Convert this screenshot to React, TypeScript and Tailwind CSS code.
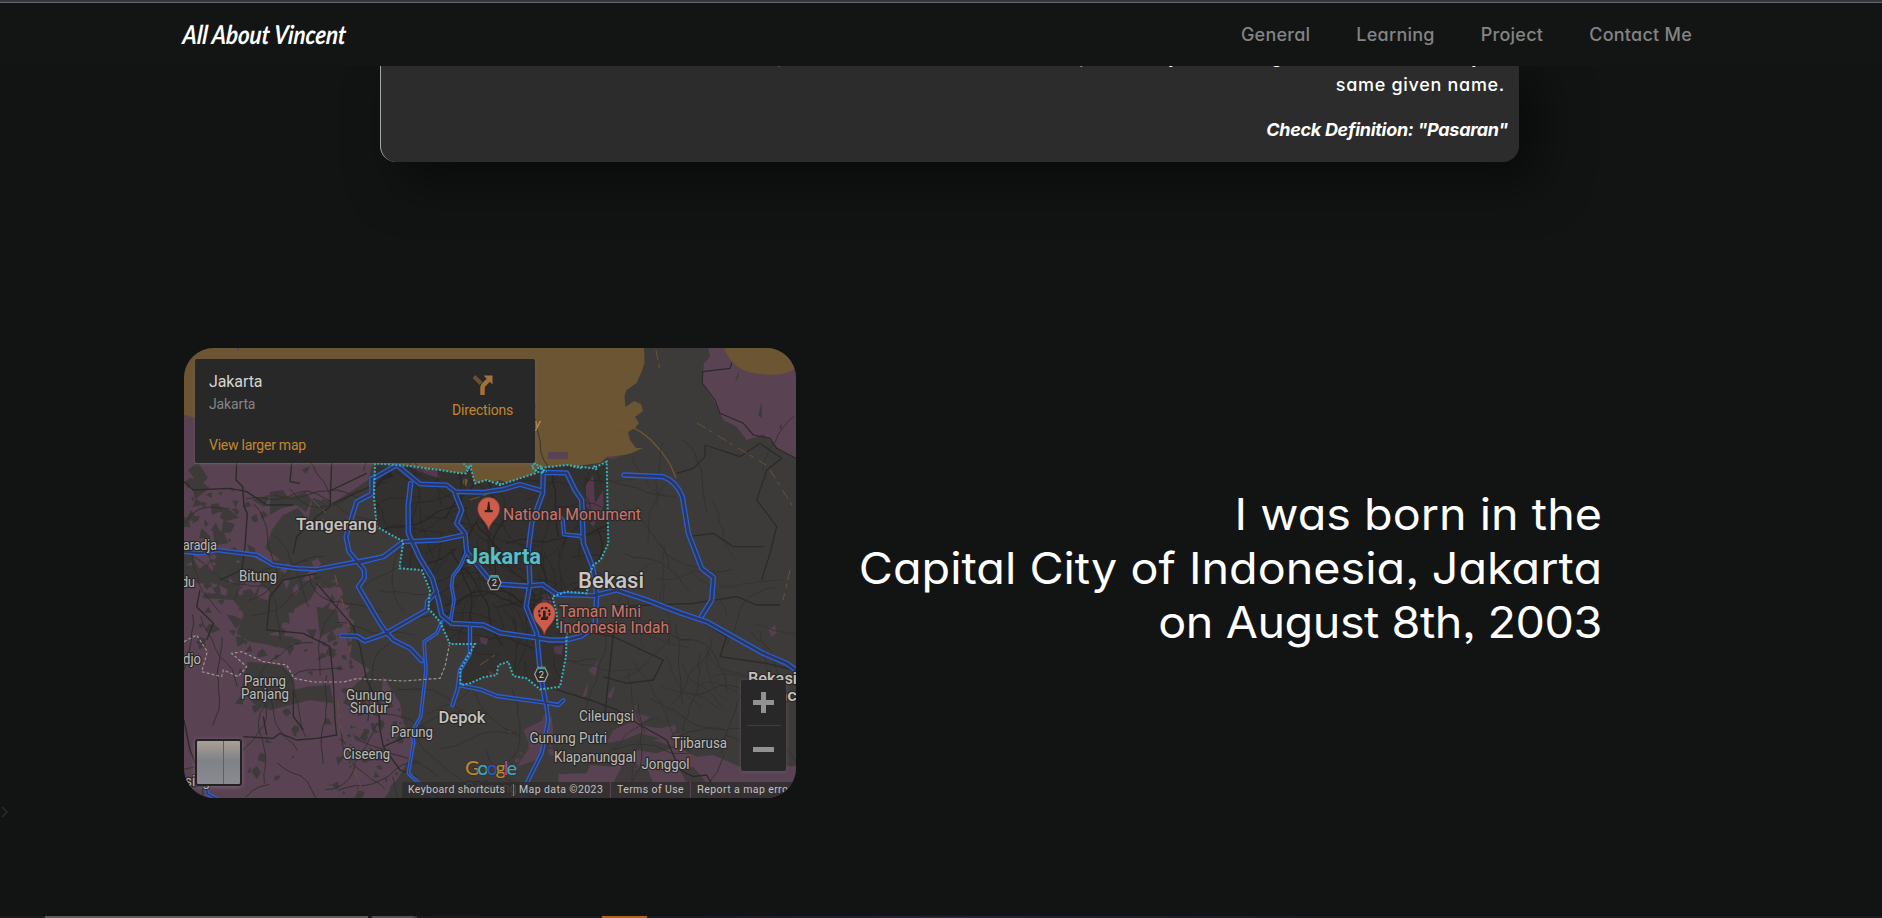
import React from "react";

const poppins = "font-[Inter,sans-serif] [font-feature-settings:'cv11'_1,'ss03'_1]";

type Pt = [number, number];

function rng(seed: number) {
  let s = seed;
  return () => {
    s = (s * 1664525 + 1013904223) % 4294967296;
    return s / 4294967296;
  };
}

function speckles(seed: number, n: number, x: number, y: number, w: number, h: number, size: number) {
  const r = rng(seed);
  let d = "";
  for (let i = 0; i < n; i++) {
    const cx = x + r() * w;
    const cy = y + r() * h;
    const k = 3 + Math.floor(r() * 3);
    const s = size * (0.3 + r());
    const a0 = r() * 6.28;
    for (let j = 0; j < k; j++) {
      const a = a0 + (j / k) * 6.28;
      const q = s * (0.3 + r());
      d += `${j ? "L" : "M"}${(cx + Math.cos(a) * q).toFixed(1)} ${(cy + Math.sin(a) * q).toFixed(1)}`;
    }
    d += "Z";
  }
  return d;
}

function lanes(seed: number, n: number, x: number, y: number, w: number, h: number, step: number, len: number) {
  const r = rng(seed);
  let d = "";
  for (let i = 0; i < n; i++) {
    let px = x + r() * w;
    let py = y + r() * h;
    let a = Math.floor(r() * 4) * 1.57 + (r() - 0.5) * 0.6;
    d += `M${px.toFixed(1)} ${py.toFixed(1)}`;
    for (let j = 0; j < len; j++) {
      a += (r() - 0.5) * 0.8;
      px += Math.cos(a) * step;
      py += Math.sin(a) * step;
      d += `L${px.toFixed(1)} ${py.toFixed(1)}`;
    }
  }
  return d;
}

const city =
  "45,70 42,170 50,260 130,305 118,385 185,390 210,450 205,505 240,545 270,612 345,612 300,690 302,735 330,730 370,712 410,705 415,675 445,665 460,708 500,715 540,748 600,740 618,650 620,580 592,560 590,520 577,470 620,455 680,460 690,400 700,375 722,360 745,310 740,65 700,85 620,75 530,85 525,100 470,118 420,135 380,120 345,130 330,75 318,100 300,100 240,90 150,78";

const highways: { at: Pt; w: number; d: string }[] = [
  { at: [360, 440], w: 11, d: "M35 118L110 75L180 132L260 135L285 155L370 157L430 148L480 133L545 152" },
  { at: [170, 340], w: 11, d: "M605 415L605 462L560 485L546 530L528 590L537 635L583 690L583 715L565 740L630 850L650 878L700 850L770 810L772 785L800 755" },
  { at: [360, 440], w: 12, d: "M152 130L144 200L145 280L180 355L217 415L235 480L245 525L275 550L370 555L420 578L520 592L570 600L620 600L665 588L705 555L710 465L698 380L670 310L665 180L645 150L620 99L550 97L548 160L515 250L505 330L510 430L498 500L530 580L540 690L555 780" },
  { at: [360, 440], w: 11, d: "M0 368L70 350L130 305L240 300L310 285" },
  { at: [360, 440], w: 12, d: "M285 160L305 210L290 250L315 280L320 335L385 415L410 432L500 438L548 434L590 463L700 467L770 450L860 480L960 518L1040 545L1120 590L1210 640L1280 670L1310 692" },
  { at: [360, 440], w: 7, d: "M318 340L300 380L278 410L275 440L282 480L272 540" },
  { at: [170, 570], w: 11, d: "M515 197L560 198L585 213L650 190M650 188L670 210L720 235L755 272" },
  { at: [170, 570], w: 7, d: "M815 155L800 190L762 215L768 300L752 440L730 480L730 520L715 610L780 670L790 690" },
  { at: [170, 570], w: 9, d: "M900 170L900 250L870 300L862 360L847 405" },
  { at: [480, 570], w: 9, d: "M-65 345L0 358L50 378L190 397L235 405L250 391" },
  { at: [480, 570], w: 9, d: "M195 380L205 450L185 550L140 640L125 690" },
  { at: [170, 340], w: 10, d: "M42 635L90 640L140 630L260 645L310 675L380 685L440 688L560 665L640 650L700 605" },
  { at: [480, 340], w: 12, d: "M432 405L550 410Q590 425 607 470L625 580L665 685L700 712L695 780L665 828" },
  { at: [360, 440], w: 9, d: "M590 222L608 240L612 283L660 288L672 300" },
  { at: [170, 570], w: 8, d: "M105 640L112 672L140 686" },
];

const labels: [string, number, number, number, number, number, string][] = [
  ["Tangerang", 296, 529.5, 17, 81, 500, "#c6c4c1"],
  ["aradja", 183, 549.5, 14, 34, 400, "#bdbbb8"],
  ["Bitung", 239, 581, 14, 38, 400, "#bdbbb8"],
  ["du", 181, 587, 14, 14, 400, "#bdbbb8"],
  ["djo", 183, 663.5, 14, 18, 400, "#bdbbb8"],
  ["Parung", 244, 685.5, 14, 42, 400, "#bdbbb8"],
  ["Panjang", 241, 699, 14, 48, 400, "#bdbbb8"],
  ["Gunung", 346, 699.5, 14, 46, 400, "#bdbbb8"],
  ["Sindur", 350, 713, 14, 38, 400, "#bdbbb8"],
  ["Parung", 391, 737, 14, 42, 400, "#bdbbb8"],
  ["Ciseeng", 343, 759, 14, 47, 400, "#bdbbb8"],
  ["Depok", 438.5, 722.5, 17, 47, 500, "#c6c4c1"],
  ["sing", 185, 785.5, 14, 25, 400, "#bdbbb8"],
  ["National Monument", 503, 520, 16, 138, 400, "#cf746c"],
  ["Jakarta", 466, 564, 22.5, 75, 700, "#55bfca"],
  ["Bekasi", 578, 587.5, 22, 66, 500, "#c9c7c4"],
  ["Taman Mini", 559, 616.5, 16, 82, 400, "#cf746c"],
  ["Indonesia Indah", 559, 632.5, 16, 110, 400, "#cf746c"],
  ["Bekasi", 748, 683.5, 16.5, 49, 500, "#c6c4c1"],
  ["nc", 777, 701, 16.5, 20, 500, "#c6c4c1"],
  ["Cileungsi", 579, 720.5, 14, 55, 400, "#bdbbb8"],
  ["Gunung Putri", 529.5, 742.5, 14, 77.5, 400, "#bdbbb8"],
  ["Klapanunggal", 554, 762, 14, 82, 400, "#bdbbb8"],
  ["Tjibarusa", 672, 747.5, 14, 55, 400, "#bdbbb8"],
  ["Jonggol", 641.5, 768.5, 14, 48, 400, "#bdbbb8"],
  ["Cibinong", 465, 793, 14, 52, 400, "#bdbbb8"],
];

function At({ p, children }: { p: Pt; children: React.ReactNode }) {
  return <g transform={`translate(${p[0]} ${p[1]}) scale(0.33333)`}>{children}</g>;
}

function Pin({ x, y, children }: { x: number; y: number; children: React.ReactNode }) {
  return (
    <g transform={`translate(${x} ${y})`}>
      <path d="M0 65C-5 38-33 30-33 0A33 33 0 0 1 33 0C33 30 5 38 0 65Z" fill="#cf5b4b" stroke="#7d3a35" strokeWidth="2" />
      {children}
    </g>
  );
}

function Shield({ x, y }: { x: number; y: number }) {
  return (
    <g transform={`translate(${x} ${y})`}>
      <path d="M-10-21H10L20 0L10 21H-10L-20 0Z" fill="#2b2a29" stroke="#a5a3a0" strokeWidth="3.5" />
      <path d="M-11-22H11L14-15H-14Z" fill="#3a9ba0" />
      <text y="10" textAnchor="middle" fontSize="28" fill="#d5d3d0">2</text>
    </g>
  );
}

function MapCanvas() {
  return (
    <svg viewBox="184 348 612 450" className="block h-[450px] w-[612px]" fontFamily="Roboto, sans-serif">
      <defs>
        <clipPath id="land-city">
          <polygon points={city} transform="translate(360 440) scale(0.33333)" />
        </clipPath>
      </defs>
      <rect x="184" y="348" width="612" height="450" fill="#3d3b39" />

      <path d="M184 415L196 418V463H373L368 480L350 492L331 504L313 498L308 520L298 508L283 515L272 530L265 548L280 560L262 562L245 552L184 550Z" fill="#594252" />
      <path d={speckles(5, 34, 184, 482, 80, 72, 9)} fill="#3d3b39" />
      <path d="M270 492L283 490L288 498L305 492L312 500L306 512L296 505L282 508L270 515ZM188 470L198 462L208 478L200 486ZM302 470L310 466L306 474Z" fill="#3d3b39" />
      <path d={speckles(51, 26, 184, 556, 80, 40, 8)} fill="#594252" />
      <path d={speckles(52, 12, 280, 560, 60, 30, 6)} fill="#594252" />
      <At p={[170, 570]}>
        <path d="M42 70L70 40L100 40L112 85L190 90L222 130L200 190L240 215L330 180L350 130L420 90L440 55L510 50L530 90L552 150L540 260L600 300L640 320L690 400L700 460L740 520L700 600L640 690H42Z" fill="#594252" />
        <path d="M232 275L330 285L370 315L372 360L410 350L480 345L490 400L420 390L340 410L300 420L250 400L215 360L222 320Z" fill="#3d3b39" />
        <path d="M240 215L290 195L370 200L360 240L300 225ZM440 110L500 120L510 170L450 200ZM600 300L640 300L630 440L590 430L520 400L540 360Z" fill="#3d3b39" />
      </At>
      <path d={speckles(77, 46, 200, 590, 160, 70, 6)} fill="#3d3b39" />
      <path d={speckles(81, 22, 240, 660, 100, 130, 5)} fill="#3d3b39" />
      <path d={speckles(78, 40, 320, 560, 50, 110, 5)} fill="#3d3b39" />
      <path d={speckles(80, 26, 340, 690, 70, 80, 6)} fill="#594252" />
      <path d={speckles(79, 60, 335, 690, 80, 108, 5)} fill="#3d3b39" />
      <At p={[480, 340]}>
        <path d="M685 24L690 50L672 70L665 130L700 180L730 240L770 260L800 300L850 283L900 330L948 355V24Z" fill="#594252" />
        <path d="M845 185L835 225L846 235ZM905 245L898 265L905 268ZM775 95L765 130L775 110Z" fill="#3d3b39" />
        <path d="M370 350L430 343L400 360Z" fill="#553a4e" />
      </At>
      <At p={[480, 570]}>
        <path d="M235 612L320 610L330 585L400 590L380 570L450 560L470 540L530 550L590 530L650 560L700 555L780 590L948 588V690H235Z" fill="#594252" />
        <path d="M380 520L400 480L455 455L440 435L470 405L468 430L510 440L480 465L540 475L585 465L590 480L560 510L480 490L430 510ZM110 590L150 530L130 480L190 450L215 440L220 490L190 520L170 570ZM325 300L355 275L345 320ZM380 380L405 345L395 385ZM305 385L325 335L320 375ZM865 180L885 165L890 190L875 200ZM520 510L600 490L580 530Z" fill="#564050" />
        <path d="M400 640L440 560L480 590L450 600L500 590L520 640L430 660ZM600 600L640 590L680 640H620Z" fill="#403a3c" />
      </At>
      <path d={speckles(16, 16, 510, 710, 45, 60, 3.5)} fill="#564050" />

      <path d="M184 348H644L644.500 363L641.500 372L636.500 383L626.500 390L624.500 396L625.500 407L634 401L641 404L643 411L635 417L639 423L635 428L628 432L630 440L636 448L643 448L632 453L624 455L607 457L600 463L567 467L545 468L525 480L510 484L500 480L487 483L475 484L470 470L460 474L440 470L396 464H195V418L184 415Z" fill="#6c5533" />
      <path d="M724 348C734 372 750 373 766 374.500S790 372 796 368V348Z" fill="#6c5533" />
      <path d="M548 452H568V459H548ZM236 348H239V351Z" fill="#594252" />
      <path d="M611 426L614 429L619 425.500L630 426L641 432L651 440L661 451L670 464L676 478" fill="none" stroke="#76582f" strokeWidth="1.2" />

      <At p={[360, 440]}>
        <polygon points={city} fill="#32312f" />
        <path d="M675 140L700 105L705 190L730 150V230L690 210L680 200ZM690 250L712 235L700 260ZM150 80L230 90L240 115L190 100ZM360 590L385 595L380 615L362 610ZM580 620L610 615L605 645L585 640ZM320 375L340 368L338 385ZM550 465L575 460L575 490L545 485ZM385 690L400 700L392 712Z" fill="#54394d" />
        <path d="M310 110L325 115L318 140L308 130ZM190 82L205 85L200 95Z" fill="#6c5533" />
        <path d="M40 145L85 85L102 110L70 120L45 150Z" fill="#292826" />
      </At>

      <g fill="none" stroke="#32302e">
        <path d={lanes(9, 60, 184, 465, 612, 330, 9, 9)} strokeWidth="0.9" />
        <path d={lanes(31, 24, 184, 470, 250, 320, 9, 10)} strokeWidth="1" />
        <path d={lanes(44, 30, 600, 470, 190, 270, 8, 8)} strokeWidth="0.9" stroke="#353331" />
        <g clipPath="url(#land-city)" stroke="#292826">
          <path d={lanes(3, 110, 375, 465, 230, 220, 8, 7)} strokeWidth="0.8" />
          <path d={lanes(13, 16, 420, 480, 150, 150, 8, 14)} strokeWidth="1.3" stroke="#272624" />
        </g>
      </g>
      <g fill="none" stroke="#2b2a28" strokeLinejoin="round">
        <At p={[170, 340]}>
          <path d="M200 370L198 420L218 440L222 500L232 520L225 620L215 690L150 720M42 425L70 450L180 445L230 455L290 495L370 495M365 370L360 425L390 430M485 370L480 500L440 530L380 590L370 640M485 450L590 400M490 490L600 440" strokeWidth="4" />
        </At>
        <At p={[170, 570]}>
          <path d="M90 60L80 110L130 160L110 210M300 80L340 30L440 10M300 80L290 180L400 190L480 230L490 330L495 450L500 495L440 505L380 510L330 490L310 505L220 500M280 440L290 495M370 360L370 440L400 480M440 40L550 170L570 230L590 330L625 400L630 480L640 530L690 600L740 620M640 530L730 490M42 450L60 540L100 640" strokeWidth="4" />
        </At>
        <At p={[480, 340]}>
          <path d="M755 68L750 85L668 95L667 130L705 180L720 220L790 250L820 285L870 295L890 325L948 355M675 350V315L780 350L840 310L905 355L860 390L830 480L890 560L870 640L845 720M675 350L640 385L590 400M625 590L700 580L760 620L850 620" strokeWidth="3.500" />
        </At>
        <At p={[480, 570]}>
          <path d="M400 110L640 100L770 80L830 105L900 105M350 190L400 200L550 270L520 330L440 340L370 320M560 510L480 465L410 420L330 390L200 350M400 190L375 430M640 140L740 200L720 260L860 280L940 300M560 510L600 600L640 620L680 615L700 650" strokeWidth="4" />
        </At>
      </g>
      <g fill="none" stroke="#6b5233" strokeWidth="1" strokeDasharray="10 4 4 6">
        <path d="M313 500L325 512L320 530M335 575L342 600L352 640L350 652M338 700L340 725L350 760L362 790M656 350L660 370M770 470L795 510M697 423L766 465M790 570L783 600M480 665L495 655M470 500L500 490M345 550L350 545" />
      </g>

      <g fill="none" strokeLinejoin="round" strokeLinecap="round">
        {highways.map((h, i) => (
          <At p={h.at} key={i}>
            <path d={h.d} stroke="#2c5dd0" strokeWidth={h.w + 4} />
          </At>
        ))}
        {highways.map((h, i) => (
          <At p={h.at} key={i}>
            <path d={h.d} stroke="#2b385d" strokeWidth={h.w - 4} />
          </At>
        ))}
      </g>
      <At p={[360, 440]}>
        <polygon points={city} fill="none" stroke="#38b0b7" strokeWidth="6" strokeDasharray="6 5" />
        <path d="M520 70L545 80L550 100L530 95L515 80L530 65M310 70L325 85L335 75M640 80L670 85M710 90L700 75M410 125L425 135M540 85L560 95" fill="none" stroke="#38b0b7" strokeWidth="6" strokeDasharray="6 4" />
      </At>
      <At p={[170, 570]}>
        <path d="M42 215L80 195L112 245L95 305L155 320L160 300L205 320L230 290L185 250L215 245L280 275L350 285L372 325L430 336L520 336L560 326L700 333L810 325L825 290L838 225" fill="none" stroke="#9d958f" strokeWidth="3.500" strokeDasharray="9 6" />
      </At>

      <At p={[360, 440]}>
        <Pin x={386} y={205}>
          <path d="M-2-20H2L5 5H12V12H-12V5H-5Z" fill="#272120" />
        </Pin>
        <Pin x={553} y={520}>
          <circle r="16" cy="-1" fill="none" stroke="#272120" strokeWidth="6" strokeDasharray="8 4.500" />
          <path d="M-4-8H4V14H10V20H-10V14H-4Z" fill="#272120" />
        </Pin>
        <Shield x={403} y={428} />
        <Shield x={544} y={703} />
      </At>

      <g stroke="#2a2827" strokeWidth="2.500" strokeLinejoin="round">
        {labels.map(([t, x, y, s, w, wt, c], i) => (
          <text key={i} x={x} y={y} fontSize={s} fontWeight={wt} fill={c} textLength={w} lengthAdjust="spacingAndGlyphs" style={{ paintOrder: "stroke" }}>
            {t}
          </text>
        ))}
      </g>
      <text x="534.500" y="428" fontSize="13" fontStyle="italic" fill="#c9935a">y</text>
      <text x="465" y="774.500" fontSize="20" fontWeight="500" textLength="52" fontFamily="Lato, sans-serif" stroke="#333130" strokeWidth="1.500" style={{ paintOrder: "stroke" }}>
        <tspan fill="#bb8430">G</tspan>
        <tspan fill="#3aabb5">o</tspan>
        <tspan fill="#3053c9">o</tspan>
        <tspan fill="#bb8430">g</tspan>
        <tspan fill="#a8478f">l</tspan>
        <tspan fill="#3aabb5">e</tspan>
      </text>
    </svg>
  );
}

function MapCard() {
  return (
    <div className="relative h-[450px] w-[612px] shrink-0 overflow-hidden rounded-[30px] font-[Roboto,sans-serif]">
      <MapCanvas />
      <div className="absolute top-[11px] left-[11px] flex h-[104px] w-[340px] justify-between rounded-[2px] bg-[#282828] pt-[13px] pr-[22px] pl-[14px] shadow-[0_1px_4px_rgba(120,110,100,0.5)]">
        <div className="flex flex-col">
          <div className="text-[16px] leading-[19px] tracking-[-0.1px] text-[#d6d4d2]">Jakarta</div>
          <div className="mt-[5px] text-[14px] leading-[16px] tracking-[-0.15px] text-[#858585]">Jakarta</div>
          <div className="mt-[25px] text-[14px] leading-[16px] tracking-[-0.25px] text-[#c2872f]">View larger map</div>
        </div>
        <div className="flex flex-col items-center">
          <svg viewBox="0 0 20 20" className="mt-[3px] h-5 w-5" fill="none">
            <path d="M1 1.500L8 8.500" stroke="#6a5032" strokeWidth="4" />
            <path d="M9.500 20V13Q9.500 10.500 12 8.500L15.500 5" stroke="#a3703a" strokeWidth="4.500" />
            <path d="M10.500 0.500H19.500V9.500Z" fill="#a3703a" />
          </svg>
          <div className="mt-[7px] text-[14px] leading-[16px] tracking-[-0.2px] text-[#c2872f]">Directions</div>
        </div>
      </div>
      <div className="absolute top-[391px] left-[11px] h-[47px] w-[47px] rounded-[3px] border-2 border-[#222] bg-[linear-gradient(180deg,#aaa18f_0%,#99948f_18%,#7e8286_45%,#8b8a92_100%)] shadow-[0_1px_5px_rgba(150,130,145,0.6)]">
        <div className="ml-[26px] h-full w-px bg-[#5f6064]" />
      </div>
      <div className="absolute top-[332px] left-[557px] flex h-[91px] w-[45px] flex-col items-center rounded-[2px] bg-[#282828] text-[#929292] shadow-[0_1px_4px_rgba(120,110,120,0.5)]">
        <svg viewBox="0 0 21 21" className="mt-3 h-[21px] w-[21px]">
          <path d="M0 8H8V0H13V8H21V13H13V21H8V13H0Z" fill="currentColor" />
        </svg>
        <div className="mt-3 h-px w-[34px] bg-[#3d3d3d]" />
        <div className="mt-[21px] h-[5px] w-[21px] bg-current" />
      </div>
      <div className="absolute right-0 bottom-0 flex h-4 w-[394px] items-center bg-[#2f2d2dd9] pl-[6px] text-[10.5px] leading-4 whitespace-nowrap text-[#c4c2c1]">
        <span className="w-[99px] tracking-[0.35px]">Keyboard shortcuts</span>
        <span className="mr-[5px] ml-[6px] h-3 w-px bg-[#777]" />
        <span className="w-[91px] tracking-[0.4px]">Map data ©2023</span>
        <span className="mr-[6px] h-4 w-px bg-[#594252]" />
        <span className="w-[73px] tracking-[0.4px]">Terms of Use</span>
        <span className="mr-[6px] h-4 w-px bg-[#594252]" />
        <span className="tracking-[0.4px]">Report a map error</span>
      </div>
    </div>
  );
}

export default function App() {
  return (
    <div className={`flex h-[918px] w-full flex-col overflow-hidden bg-[#121413] text-white ${poppins}`}>
      <header className="relative z-10 flex h-[66px] shrink-0 flex-col bg-[#131514]">
        <div className="h-[3px] shrink-0 border-b border-[#66666a] bg-[#36373b]" />
        <div className="flex items-start justify-between pr-[190px] pl-[183px]">
          <div className="mt-[15px] origin-left scale-x-[0.85] -skew-x-6 font-[Lato,sans-serif] text-[26px] leading-[32px] font-bold whitespace-nowrap italic">
            All About Vincent
          </div>
          <nav className="mt-[20px] flex gap-[46px] text-[18px] leading-[24px] font-medium tracking-[0.25px] whitespace-nowrap text-[#838483]">
            <a>General</a>
            <a>Learning</a>
            <a>Project</a>
            <a>Contact Me</a>
          </nav>
        </div>
      </header>

      <section className="-mt-4 ml-[380px] flex h-[112px] w-[1139px] shrink-0 flex-col items-end rounded-2xl border-l border-[#a5a6a5] bg-[#2b2c2b] pr-[11px] text-[18px] whitespace-nowrap shadow-[20px_20px_50px_rgba(0,0,0,0.5)]">
        <div className="-mt-1 flex h-[22px] w-full items-end leading-[22px]">
          <span className="w-[299px] pl-[396px] leading-[20px]">,</span>
          <span className="w-[90px] pl-[302px]">p</span>
          <span className="w-[102px] pl-[89px]">y</span>
          <span className="w-[150px] pl-[90px]">g</span>
          <span className="pl-[140px]">y</span>
        </div>
        <div className="mt-[5px] mr-[3px] leading-[24px] font-[450] tracking-[0.7px]">same given name.</div>
        <div className="mt-[21px] leading-[24px] font-bold tracking-[-0.3px] italic">Check Definition: "Pasaran"</div>
      </section>

      <section className="mt-[186px] flex shrink-0 items-center pr-[280px] pl-[184px]">
        <MapCard />
        <h1 className="-mt-[10px] flex flex-1 origin-right scale-x-[1.062] flex-col items-end text-[44px] leading-[54px] whitespace-nowrap">
          <span>I was born in the</span>
          <span>Capital City of Indonesia, Jakarta</span>
          <span className="tracking-[-0.45px]">on August 8th, 2003</span>
        </h1>
      </section>

      <svg viewBox="0 0 8 12" className="mt-[7px] h-3 w-2 shrink-0" fill="none" stroke="#2b2e30" strokeWidth="1.300">
        <path d="M2 2L7 7L2 12" />
      </svg>
      <div className="mt-auto flex h-[2px] shrink-0 bg-[linear-gradient(90deg,#1f1d1c_0px,#1b1a1f_450px,#1b1b24_700px,#262438_940px,#1b1c22_1300px,#1b1c1e_100%)]">
        <div className="ml-[45px] w-[323px] bg-[#5b5b5a]" />
        <div className="ml-1 w-[41px] bg-[#525151]" />
        <div className="w-1 bg-[#3d3c3c]" />
        <div className="ml-[185px] w-[45px] bg-[#b0641f]" />
      </div>
    </div>
  );
}
